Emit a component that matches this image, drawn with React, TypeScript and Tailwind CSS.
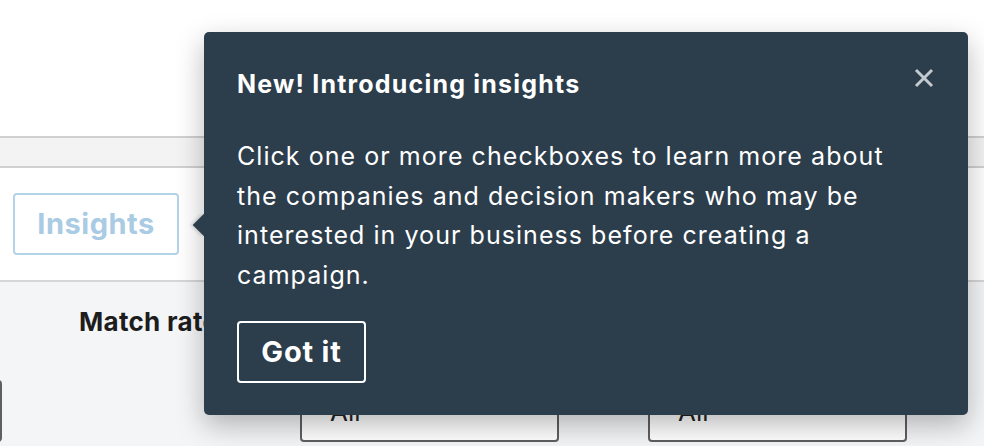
import React from "react";

export default function App() {
  return (
    <div className="relative w-[984px] h-[446px] overflow-hidden bg-white font-['Inter',sans-serif]">
      <div className="h-[136px] bg-white" />
      <div className="h-[32px] border-y-2 border-[#d0d0d0] bg-[#f3f3f3]" />
      <div className="h-[114px] flex items-center pl-[13px] border-b-2 border-[#d6d6d6] bg-white">
        <button className="w-[166px] h-[62px] rounded-[4px] border-2 border-[#b5d3e7] text-[#a9cbe3] text-[29px] tracking-[0.5px] font-bold bg-white">
          Insights
        </button>
      </div>
      <div className="h-[164px] bg-[#f3f5f7] flex flex-col">
        <div className="pl-[79px] pt-[24px] h-[98px] text-[26px] tracking-[0.3px] font-bold text-[#1d1d1d] leading-[32px]">
          Match rate
        </div>
        <div className="flex items-start">
          <div className="w-[46px] h-[62px] -ml-[44px] rounded-r-[4px] border-r-2 border-[#5f5f5f] bg-white" />
          <div className="ml-[298px] w-[259px] h-[62px] rounded-[4px] border-2 border-[#5f5f5f] bg-white flex items-center justify-between px-[28px]">
            <span className="text-[26px] text-[#222]">All</span>
            <span className="w-0 h-0 border-l-[7px] border-r-[7px] border-t-[7px] border-l-transparent border-r-transparent border-t-[#333] mr-[11px]" />
          </div>
          <div className="ml-[89px] w-[259px] h-[62px] rounded-[4px] border-2 border-[#5f5f5f] bg-white flex items-center justify-between px-[28px]">
            <span className="text-[26px] text-[#222]">All</span>
            <span className="w-0 h-0 border-l-[7px] border-r-[7px] border-t-[7px] border-l-transparent border-r-transparent border-t-[#333] mr-[11px]" />
          </div>
        </div>
      </div>

      <div className="absolute left-[204px] top-[32px] w-[764px] h-[383px] rounded-[5px] bg-[#2c3d4c] shadow-[0_10px_28px_rgba(0,0,0,0.28)] pl-[33px] pr-[40px] pt-[37px]">
        <div className="absolute -left-[8px] top-[185px] w-[16px] h-[16px] rotate-45 bg-[#2c3d4c] shadow-[-2px_2px_3px_rgba(0,0,0,0.12)]" />
        <button className="absolute right-[34px] top-[36px] w-[20px] h-[20px] flex items-center justify-center">
          <svg width="20" height="20" viewBox="0 0 20 20">
            <path d="M2 2 L18 18 M18 2 L2 18" stroke="#c4cad0" strokeWidth="3" strokeLinecap="butt" />
          </svg>
        </button>
        <div className="relative text-white text-[25px] tracking-[1.2px] font-bold leading-[30px]">
          New! Introducing insights
        </div>
        <p className="relative mt-[38px] text-white text-[25px] tracking-[1.05px] leading-[39.7px]">
          Click one or more checkboxes to learn more about
          <br />
          the companies and decision makers who may be
          <br />
          interested in your business before creating a
          <br />
          campaign.
        </p>
        <button className="relative mt-[25px] w-[129px] h-[62px] rounded-[4px] border-2 border-white text-white text-[29px] tracking-[0.8px] font-bold">
          Got it
        </button>
      </div>
    </div>
  );
}
